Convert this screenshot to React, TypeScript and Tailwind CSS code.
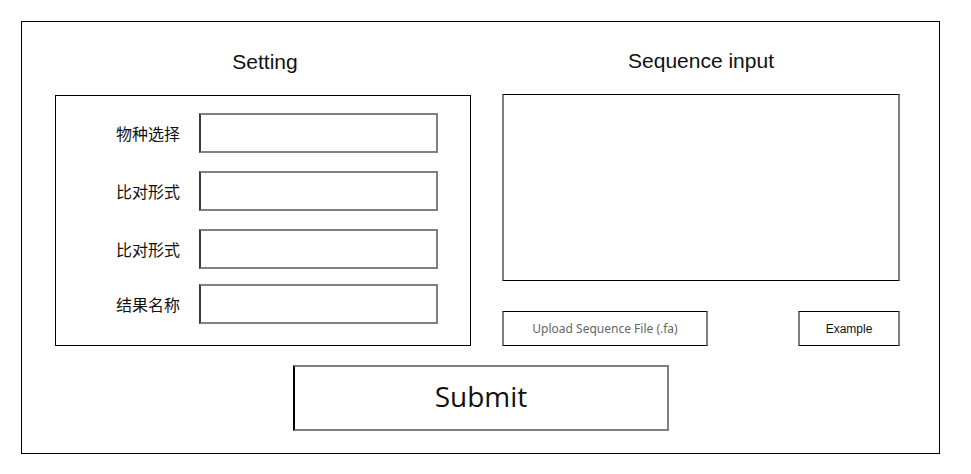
import React from "react";

const cjk = { fontFamily: '"Noto Sans CJK SC", "Noto Sans", sans-serif' };

function Field({ label, className }: { label: string; className: string }) {
  return (
    <div className={"flex items-center " + className}>
      <div className="w-[124px] text-right text-[16px] leading-[20px] text-[#111]" style={cjk}>
        {label}
      </div>
      <div className="ml-[19px] w-[239px] h-[40px] border-2 border-[#808080] border-l-[#3a3a3a] bg-white" />
    </div>
  );
}

export default function App() {
  return (
    <div className="w-[971px] h-[474px] bg-white pt-[21px] pl-[21px]">
      <div className="w-[919px] h-[433px] border border-black flex flex-col">
        <div className="flex pl-[33px]">
          <div className="w-[416px] flex flex-col">
            <div className="mt-[28px] pl-[4px] h-[24px] leading-[24px] text-center text-[21px] text-[#111] font-['Liberation_Sans',Arial,sans-serif]">
              Setting
            </div>
            <div className="mt-[21px] h-[251px] border border-black flex flex-col">
              <Field label="物种选择" className="mt-[17px]" />
              <Field label="比对形式" className="mt-[18px]" />
              <Field label="比对形式" className="mt-[18px]" />
              <Field label="结果名称" className="mt-[15px]" />
            </div>
          </div>
          <div className="ml-[31px] w-[398px] flex flex-col">
            <div className="mt-[27px] h-[24px] leading-[24px] text-center text-[21px] text-[#111] font-['Liberation_Sans',Arial,sans-serif]">
              Sequence input
            </div>
            <div className="mt-[21px] h-[187px] border-y border-y-black border-x-2 border-x-[#808080] bg-white" />
            <div className="mt-[30px] flex justify-between">
              <div className="w-[206px] h-[35px] border-y border-y-black border-x-2 border-x-[#808080] flex items-center justify-center text-[12px] text-[#666] font-['Noto_Sans',sans-serif]">
                Upload Sequence File (.fa)
              </div>
              <div className="w-[102px] h-[35px] border-y border-y-black border-x-2 border-x-[#808080] flex items-center justify-center text-[12px] text-[#111] font-['Liberation_Sans',Arial,sans-serif]">
                Example
              </div>
            </div>
          </div>
        </div>
        <div className="mt-[19px] ml-[271px] w-[376px] h-[66px] pb-[4px] border-2 border-[#808080] border-l-black flex items-center justify-center text-[28px] text-[#111] font-['Open_Sans',sans-serif]">
          Submit
        </div>
      </div>
    </div>
  );
}
